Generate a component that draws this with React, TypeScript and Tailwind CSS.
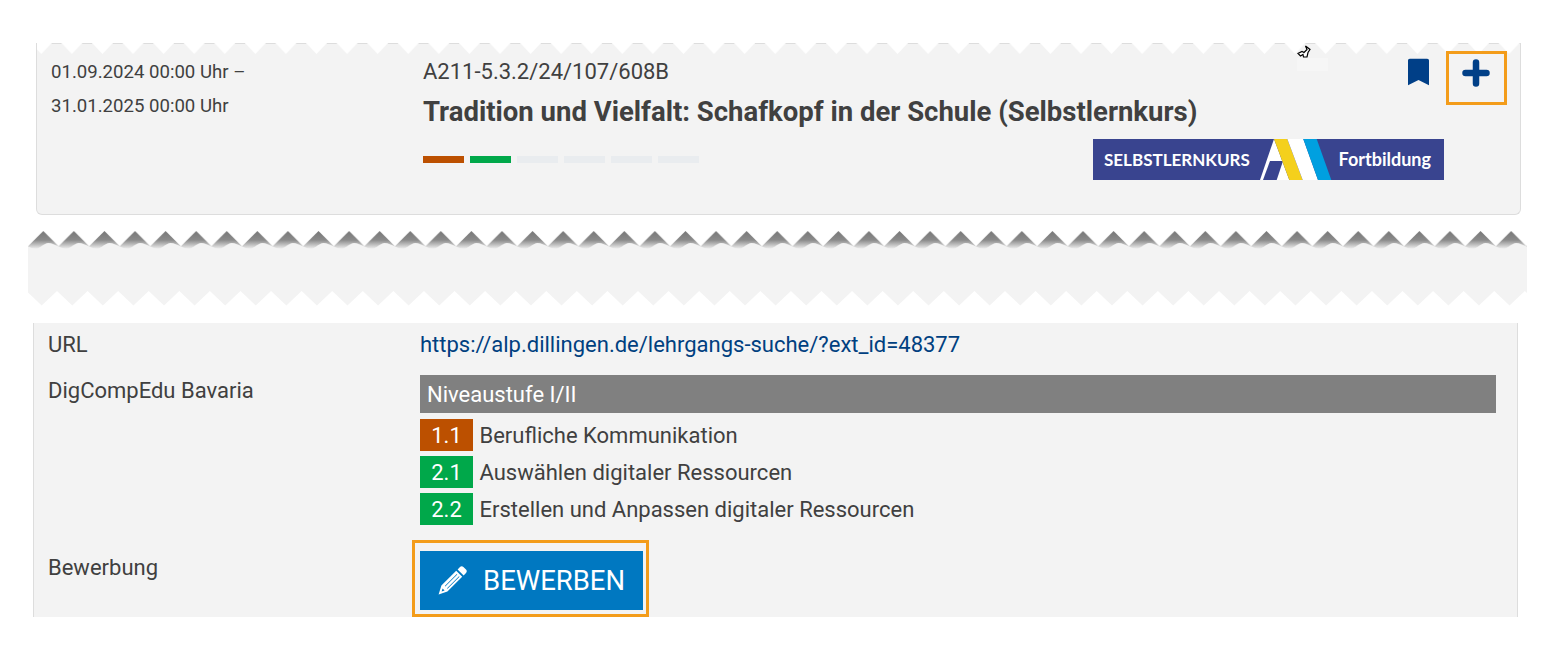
import { useId } from 'react';

const skills = [
  { code: '1.1', label: 'Berufliche Kommunikation', color: 'bg-[#bc5000]' },
  { code: '2.1', label: 'Auswählen digitaler Ressourcen', color: 'bg-[#00a84a]' },
  { code: '2.2', label: 'Erstellen und Anpassen digitaler Ressourcen', color: 'bg-[#00a84a]' },
];

const bars = ['bg-[#bc5000]', 'bg-[#00a84a]', 'bg-[#e9ecef]', 'bg-[#e9ecef]', 'bg-[#e9ecef]', 'bg-[#e9ecef]'];

// white notches along the top of the first card
function TopNotches() {
  const id = useId();
  return (
    <svg className="absolute left-0 top-0" width="1483" height="12" aria-hidden="true">
      <defs>
        <pattern id={id} x="-11" width="30.58" height="12" patternUnits="userSpaceOnUse">
          <path d="M5 0L15.3 11L25.6 0Z" fill="#fff" />
          <path d="M0 0.5H5M25.6 0.5H30.6" stroke="#dddddd" strokeWidth="1" />
        </pattern>
      </defs>
      <rect width="1483" height="12" fill={`url(#${id})`} />
    </svg>
  );
}

function TornStrip() {
  const id = useId();
  return (
    <svg className="block" width="1499" height="75" aria-hidden="true">
      <defs>
        <linearGradient id={`${id}g`} gradientUnits="userSpaceOnUse" x1="0" y1="0" x2="0" y2="18">
          <stop offset="0" stopColor="#777777" />
          <stop offset="0.5" stopColor="#8a8a8a" />
          <stop offset="0.9" stopColor="#dcdcdc" />
          <stop offset="1" stopColor="#f0f0f0" />
        </linearGradient>
        <pattern id={`${id}t`} x="0" width="30.58" height="19" patternUnits="userSpaceOnUse">
          <path d="M15.3 0L0 15.3V19H30.6V15.3Z" fill={`url(#${id}g)`} />
          <path d="M0 15.6C3 17.2 6 18 9 17.4C13 16.4 15.5 12.6 20.3 12C24 12 27 14 30.6 15.6V19H0Z" fill="#f3f3f3" />
        </pattern>
      </defs>
      <rect width="1499" height="19" fill={`url(#${id}t)`} />
      <path d="M0 19H1499V60H0Z" fill="#f3f3f3" />
      <g fill="#f3f3f3">
        {Array.from({ length: 50 }).map((_, i) => (
          <path key={i} d={`M${i * 30.58 - 1.6} 60L${i * 30.58 + 13.7} 74.5L${i * 30.58 + 29} 60Z`} />
        ))}
      </g>
    </svg>
  );
}

function Pencil() {
  return (
    <svg width="29" height="29" viewBox="0 0 29 29" aria-hidden="true">
      <g fill="#fff">
        <path d="M22 1C23 0 24.4 0 25.4 1L28 3.6C29 4.6 29 6 28 7L25.6 9.4L19.6 3.4Z" />
        <path fillRule="evenodd" d="M18.2 4.8L24.2 10.8L9.4 25.6L.6 28.6L3.4 19.6ZM18.8 8L6.8 20L7.3 20.5L19.3 8.5ZM21 10.2L9 22.2L9.5 22.7L21.5 10.7ZM4.6 22.6L3.6 25.6L6.6 24.6Z" />
      </g>
    </svg>
  );
}

function Logo() {
  return (
    <div className="relative flex h-[41px] w-[351px] shrink-0 items-center justify-between bg-[#39448f] pl-[11px] pr-[13px] font-['Lato',sans-serif] text-white">
      <span className="text-[17px] font-bold">SELBSTLERNKURS</span>
      <span className="text-[18px] font-bold">Fortbildung</span>
      <svg className="absolute left-0 top-0" width="351" height="41" aria-hidden="true">
        <path d="M181 0L196.3 41H167Z" fill="#fff" />
        <path d="M177 22H190L183.7 41H170Z" fill="#39448f" />
        <path d="M181 0H194.3L209.7 41H196.3Z" fill="#f4d01c" />
        <path d="M194.3 0H210.3L225 41H209.7Z" fill="#fff" />
        <path d="M210.3 0H223.7L238.3 41H225Z" fill="#00a0e0" />
      </svg>
    </div>
  );
}

export default function App() {
  return (
    <div className="h-[654px] bg-white pt-[43px] font-['Roboto',sans-serif] text-[#404040]">
      {/* course card */}
      <div className="relative ml-9 flex h-[172px] w-[1485px] rounded-b-md border-x border-b border-[#dddddd] bg-[#f3f3f3]">
        <TopNotches />
        <div className="w-[386px] shrink-0 pl-[14px] pt-[12px] text-[18.6px] leading-[34px]">
          <p>01.09.2024 00:00 Uhr –</p>
          <p>31.01.2025 00:00 Uhr</p>
        </div>
        <div className="w-[1021px] shrink-0 pt-[15px]">
          <p className="text-[22px] leading-[28px]">A211-5.3.2/24/107/608B</p>
          <h2 className="mt-[11px] text-[27.5px] font-bold leading-[30px]">Tradition und Vielfalt: Schafkopf in der Schule (Selbstlernkurs)</h2>
          <div className="mt-[12px] flex items-start justify-between">
            <div className="mt-[17px] flex gap-[6px]">
              {bars.map((color, i) => (
                <div key={i} className={`h-[7px] w-[41px] ${color}`} />
              ))}
            </div>
            <Logo />
          </div>
        </div>
        <div className="absolute left-[1371px] top-[15px]">
          <svg width="21" height="28" viewBox="0 0 22 28" aria-hidden="true">
            <path d="M0 2C0 .9 .6 0 2 0H20C21.4 0 22 .9 22 2V28L11 22.5L0 28Z" fill="#003f87" />
          </svg>
        </div>
        <button
          type="button"
          className="absolute left-[1409px] top-[8px] flex h-[54px] w-[61px] items-start justify-center border-[3px] border-[#f39c1a] pr-[2px] pt-[5px]"
        >
          <svg width="28" height="28" viewBox="0 0 28 28" aria-hidden="true">
            <path d="M14 3.5V24.5M3.5 14H24.5" stroke="#003f87" strokeWidth="6.5" strokeLinecap="round" />
          </svg>
        </button>
        {/* stray mouse pointer caught in the capture */}
        <div className="absolute left-[1260px] top-[15px] h-[13px] w-[31px] bg-[#f6f6f6]" />
        <svg className="absolute left-[1260px] top-[2px]" width="15" height="14" viewBox="0 0 15 14" aria-hidden="true">
          <path d="M8.5 1L13 4.5L11 7.5L10 12H6.5L6 9.5L3.5 11L1 8.5L5 6.5L7 7.5L10 4.5Z" fill="#fff" stroke="#000" strokeWidth="1.2" />
        </svg>
      </div>

      <div className="ml-7 mt-4">
        <TornStrip />
      </div>

      {/* details */}
      <div className="ml-[33px] mt-[17px] h-[294px] w-[1485px] border-x border-[#dddddd] bg-[#f3f3f3] pt-[8px] text-[22px]">
        <div className="grid grid-cols-[386px_1fr] leading-[28px]">
          <div className="pl-[14px]">URL</div>
          <a className="text-[#004080]" href="#">https://alp.dillingen.de/lehrgangs-suche/?ext_id=48377</a>
        </div>
        <div className="mt-[16px] grid grid-cols-[386px_1fr]">
          <div className="pl-[14px] leading-[32px]">DigCompEdu Bavaria</div>
          <div className="pr-[21px]">
            <div className="flex h-[38px] items-center bg-[#808080] pl-[7px] text-white">Niveaustufe I/II</div>
            <div className="mt-[6px] flex flex-col gap-[5px]">
              {skills.map((s) => (
                <div key={s.code} className="flex h-8 items-center">
                  <span className={`flex h-8 w-[53px] items-center justify-center text-white ${s.color}`}>{s.code}</span>
                  <span className="ml-[6.5px]">{s.label}</span>
                </div>
              ))}
            </div>
          </div>
        </div>
        <div className="mt-[15px] grid grid-cols-[386px_1fr]">
          <div className="pl-[14px] pt-[12px] leading-[32px]">Bewerbung</div>
          <div className="relative h-[77px]">
            <div className="absolute -left-2 top-0 h-[77px] w-[237px] border-[3px] border-[#f39c1a]" />
            <button
              type="button"
              className="absolute left-0 top-[11px] flex h-[59px] w-[223px] items-center gap-[16px] bg-[#0078c1] pl-[18px] text-[27.5px] text-white"
            >
              <Pencil />
              BEWERBEN
            </button>
          </div>
        </div>
      </div>
    </div>
  );
}
